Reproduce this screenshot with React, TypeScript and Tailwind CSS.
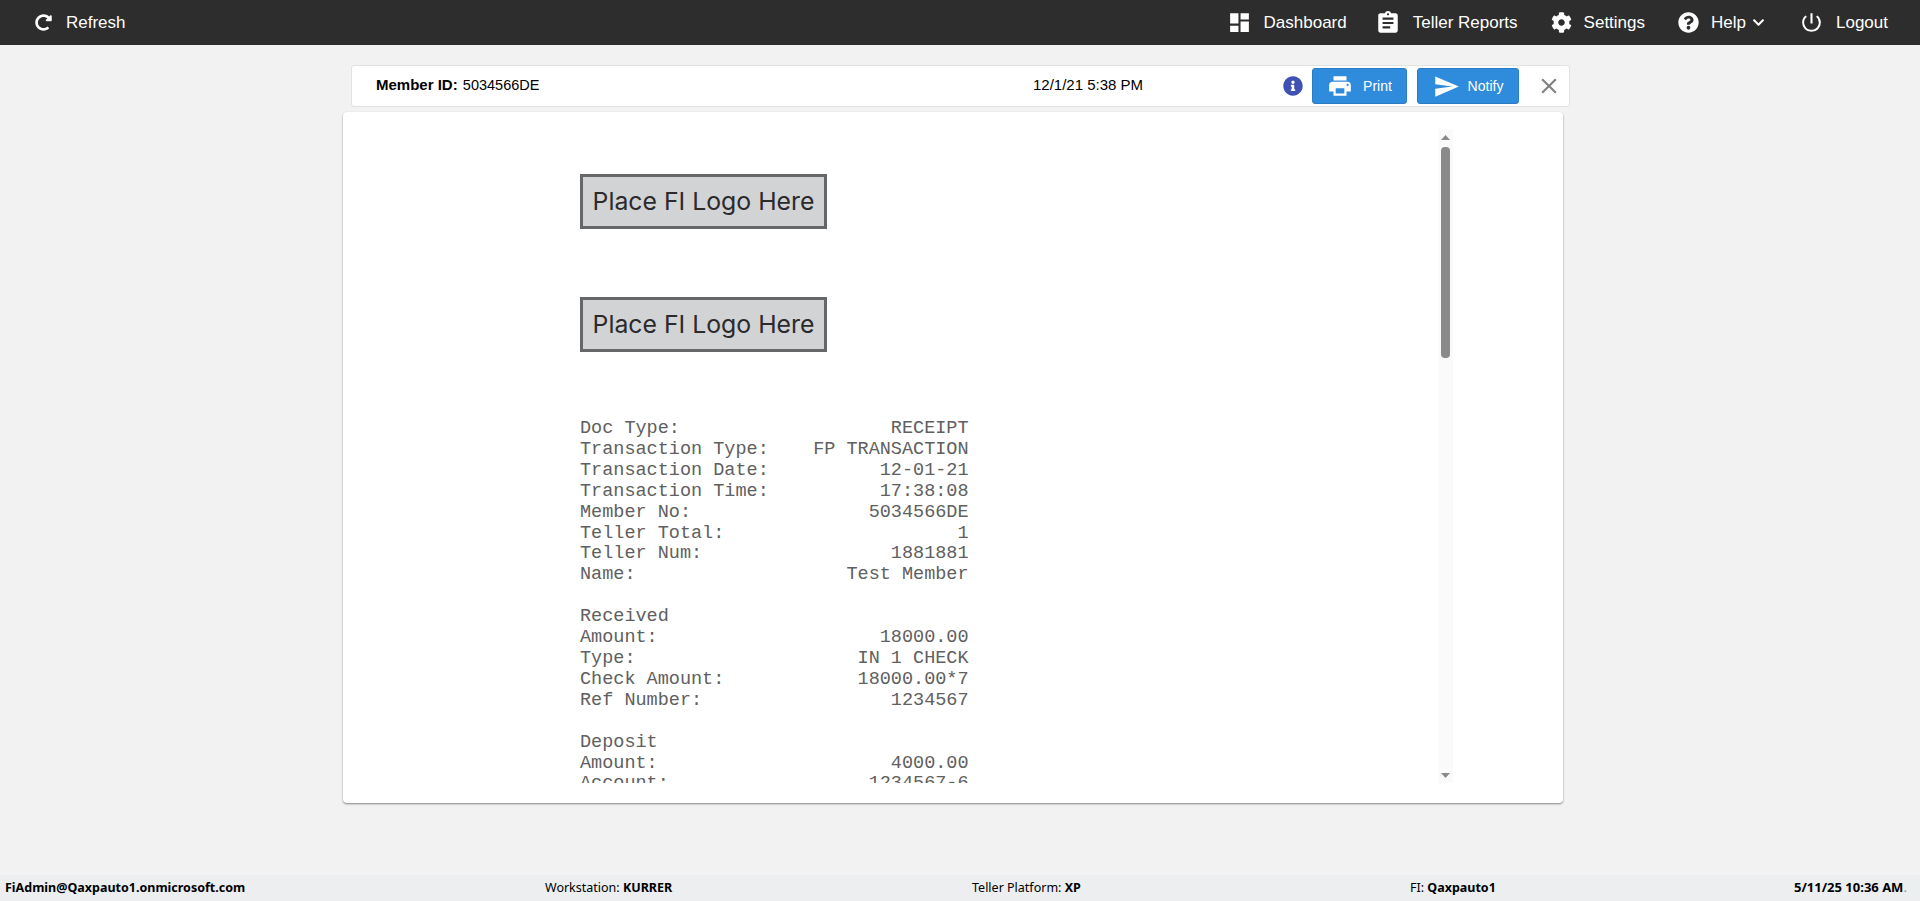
import React from "react";
import { MdDashboard, MdAssignment, MdPowerSettingsNew, MdPrint, MdSend, MdClose } from "react-icons/md";
import { FaCog, FaQuestionCircle, FaInfoCircle, FaChevronDown, FaRedoAlt } from "react-icons/fa";

const receipt = `Doc Type:                   RECEIPT
Transaction Type:    FP TRANSACTION
Transaction Date:          12-01-21
Transaction Time:          17:38:08
Member No:                5034566DE
Teller Total:                     1
Teller Num:                 1881881
Name:                   Test Member

Received
Amount:                    18000.00
Type:                    IN 1 CHECK
Check Amount:            18000.00*7
Ref Number:                 1234567

Deposit
Amount:                     4000.00
Account:                  1234567-6`;

function Logo() {
  return (
    <div className="flex h-[55px] w-[247px] items-center justify-center border-[3px] border-[#666769] bg-[#d2d3d5] font-['Inter',sans-serif] text-[24.8px] text-[#2b2a2c]">
      Place FI Logo Here
    </div>
  );
}

function NavItem({ icon, label, className }: { icon: React.ReactNode; label: string; className?: string }) {
  return (
    <div className={`flex items-center gap-[12px] ${className ?? ""}`}>
      {icon}
      <span>{label}</span>
    </div>
  );
}

export default function App() {
  return (
    <div className="flex h-screen flex-col overflow-hidden bg-[#f2f2f2] font-['Liberation_Sans',sans-serif] text-black">
      <header className="flex h-[45px] shrink-0 items-center bg-[#2d2d2d] pl-[35px] text-[17px] text-white">
        <NavItem icon={<FaRedoAlt className="h-[17px] w-[17px]" />} label="Refresh" className="gap-[14px]" />
        <div className="ml-auto flex items-center pr-[32px]">
          <NavItem icon={<MdDashboard className="h-[25px] w-[25px]" />} label="Dashboard" className="gap-[9px]" />
          <NavItem icon={<MdAssignment className="h-[26px] w-[26px]" />} label="Teller Reports" className="ml-[28px] gap-[9px]" />
          <NavItem icon={<FaCog className="h-[21px] w-[21px]" />} label="Settings" className="ml-[33px]" />
          <div className="ml-[33px] flex items-center">
            <FaQuestionCircle className="h-[21px] w-[21px]" />
            <span className="ml-[12px]">Help</span>
            <FaChevronDown className="ml-[6px] h-[13px] w-[13px]" />
          </div>
          <NavItem icon={<MdPowerSettingsNew className="h-[25px] w-[25px]" />} label="Logout" className="ml-[34px] gap-[8px]" />
        </div>
      </header>

      <main className="min-h-0 flex-1">
        <div className="ml-[351px] mt-[20px] flex h-[42px] w-[1219px] items-center rounded-[3px] border border-[#e2e2e2] bg-white text-[15px]">
          <div className="ml-[24px] w-[657px] pb-[2px]">
            <span className="font-bold">Member ID:</span> <span className="ml-[1px] text-[14.5px]">5034566DE</span>
          </div>
          <div className="w-[250px] pb-[2px]">12/1/21 5:38 PM</div>
          <FaInfoCircle className="h-[20px] w-[20px] text-[#3f51b5]" />
          <button className="ml-[9px] flex h-[36px] w-[95px] items-center justify-center gap-[10px] rounded-[3px] border border-[#2a7cc4] bg-[#2f8bdb] text-[14px] text-white">
            <MdPrint className="h-[26px] w-[26px]" />
            Print
          </button>
          <button className="ml-[10px] flex h-[36px] w-[102px] items-center justify-center gap-[8px] rounded-[3px] border border-[#2a7cc4] bg-[#2f8bdb] text-[14px] text-white">
            <MdSend className="h-[27px] w-[27px]" />
            Notify
          </button>
          <MdClose className="ml-[17px] h-[26px] w-[26px] text-[#808080]" />
        </div>

        <div className="ml-[343px] mt-[5px] flex h-[691px] w-[1220px] rounded-[4px] bg-white pb-[20px] pl-[237px] pt-[17px] shadow-[0_1px_2px_rgba(0,0,0,0.45)]">
          <div className="w-[858px] overflow-hidden pt-[45px]">
            <Logo />
            <div className="mt-[68px]">
              <Logo />
            </div>
            <pre className="mt-[67px] font-['Liberation_Mono',monospace] text-[18.5px] leading-[20.9px] text-[#606060]">{receipt}</pre>
          </div>
          <div className="flex w-[15px] flex-col items-center bg-[#fafafa] pt-[6px] pb-[5px]">
            <svg width="9" height="5" viewBox="0 0 9 5" className="shrink-0 fill-[#8a8a8a]"><path d="M4.5 0 9 5H0z" /></svg>
            <div className="mt-[7px] h-[211px] w-[9px] shrink-0 rounded-[4px] bg-[#8a8a8a]" />
            <svg width="9" height="5" viewBox="0 0 9 5" className="mt-auto shrink-0 fill-[#8a8a8a]"><path d="M4.5 5 9 0H0z" /></svg>
          </div>
        </div>
      </main>

      <footer className="flex h-[26px] shrink-0 items-center bg-[#eceef0] pl-[5px] font-['Noto_Sans',sans-serif] text-[12.5px] text-black">
        <span className="w-[540px] font-bold">FiAdmin@Qaxpauto1.onmicrosoft.com</span>
        <span className="w-[427px]">Workstation: <b>KURRER</b></span>
        <span className="w-[438px]">Teller Platform: <b>XP</b></span>
        <span className="w-[384px]">FI: <b>Qaxpauto1</b></span>
        <span className="text-[13px] font-bold">5/11/25 10:36 AM<span className="font-normal text-[#8a8f99]">.</span></span>
      </footer>
    </div>
  );
}
